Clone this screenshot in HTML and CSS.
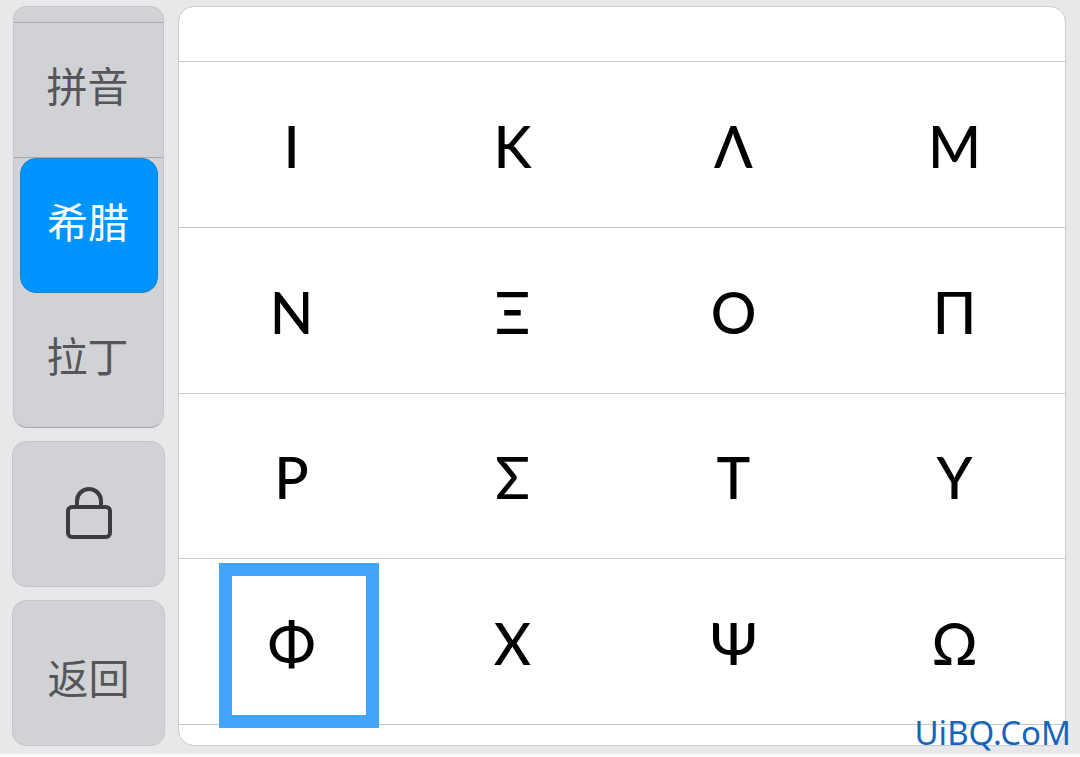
FILE: index.html
```html
<!DOCTYPE html>
<html lang="zh-CN">
<head>
  <meta charset="UTF-8">
  <meta name="viewport" content="width=device-width, initial-scale=1.0">
  <title>希腊字母键盘</title>
  <link rel="stylesheet" href="styles.css">
</head>
<body>
  <main class="keyboard">
    <div class="sidebar">
      <div class="tabs">
        <button type="button" class="tab lined">拼音</button>
        <button type="button" class="tab active">希腊</button>
        <button type="button" class="tab">拉丁</button>
      </div>
      <button type="button" class="side-button" aria-label="锁定">
        <svg class="lock" viewBox="0 0 48 56" fill="none" stroke="#3b3c3f" stroke-width="4" aria-hidden="true">
          <rect x="3" y="21" width="42" height="30" rx="4"/>
          <path d="M12 21V15a12 12 0 0 1 24 0v6"/>
        </svg>
      </button>
      <button type="button" class="side-button back">返回</button>
    </div>

    <div class="panel">
      <div class="row">
        <button type="button" class="key">Ι</button>
        <button type="button" class="key">Κ</button>
        <button type="button" class="key">Λ</button>
        <button type="button" class="key">Μ</button>
      </div>
      <div class="row">
        <button type="button" class="key">Ν</button>
        <button type="button" class="key">Ξ</button>
        <button type="button" class="key">Ο</button>
        <button type="button" class="key">Π</button>
      </div>
      <div class="row">
        <button type="button" class="key">Ρ</button>
        <button type="button" class="key">Σ</button>
        <button type="button" class="key">Τ</button>
        <button type="button" class="key">Υ</button>
      </div>
      <div class="row">
        <button type="button" class="key marked">Φ</button>
        <button type="button" class="key">Χ</button>
        <button type="button" class="key">Ψ</button>
        <button type="button" class="key">Ω</button>
      </div>
    </div>
    <span class="watermark">UiBQ.CoM</span>
  </main>
</body>
</html>
```
FILE: styles.css
```css
* {
    box-sizing: border-box;
}
body {
    margin: 0;
    background: #e8e8eb;
    font-family: "Noto Sans CJK SC", sans-serif;
}
button {
    margin: 0;
    padding: 0;
    border: none;
    background: none;
    font: inherit;
    color: inherit;
    cursor: pointer;
}
.keyboard {
    position: relative;
    display: grid;
    grid-template-columns: 153px 1fr;
    gap: 13px;
    min-height: 100vh;
    padding: 6px 14px 8px 12px;
    border-bottom: 3px solid #fbfbfb;
}

/* left column */
.sidebar {
    display: flex;
    flex-direction: column;
    gap: 13px;
    font-size: 41px;
    line-height: 60px;
    color: #55565a;
}
.tabs {
    display: flex;
    flex-direction: column;
    flex: 405 1 0;
    margin: 0 1px;
    padding-top: 15px;
    border: 1px solid #c6c6ca;
    border-bottom-color: #a9a9ad;
    border-radius: 14px;
    background: #d1d2d5;
}
.tab {
    flex: 1;
    padding: 0 2px 12px 0;
}
.tab.lined {
    border-top: 1px solid #a9a9ad;
    border-bottom: 1px solid #a9a9ad;
}
.tab.active {
    margin: 0 5px 0 6px;
    border: 1px solid #1482d2;
    border-radius: 16px;
    background: #0094ff;
    color: #fff;
}
.side-button {
    display: flex;
    flex: 144 1 0;
    align-items: center;
    justify-content: center;
    border: 1px solid #c6c6ca;
    border-radius: 14px;
    background: #d1d2d5;
}
.side-button.back {
    flex-grow: 138;
    padding-top: 6px;
}
.lock {
    width: 48px;
    height: 56px;
}

/* letters */
.panel {
    display: flex;
    flex-direction: column;
    padding: 54px 0 20px;
    border: 1px solid #cbcbce;
    border-radius: 16px;
    background: #fff;
}
.row {
    display: grid;
    grid-template-columns: repeat(4, 1fr);
    flex: 1;
    padding-left: 2px;
    border-top: 1px solid #c8c8ca;
}
.row:last-child {
    border-bottom: 1px solid #c8c8ca;
}
.key {
    position: relative;
    padding-top: 3px;
    font-family: Lato, "Noto Sans", sans-serif;
    font-size: 57px;
    font-weight: 500;
    line-height: 72px;
    color: #000;
}
.marked::after {
    content: "";
    position: absolute;
    top: 4px;
    right: 23px;
    bottom: -4px;
    left: 38px;
    border: 13px solid #42a5fc;
}
.watermark {
    position: absolute;
    right: 9px;
    bottom: 0;
    font-family: "Noto Sans", sans-serif;
    font-size: 33px;
    line-height: 42px;
    color: #1565c0;
}
```
